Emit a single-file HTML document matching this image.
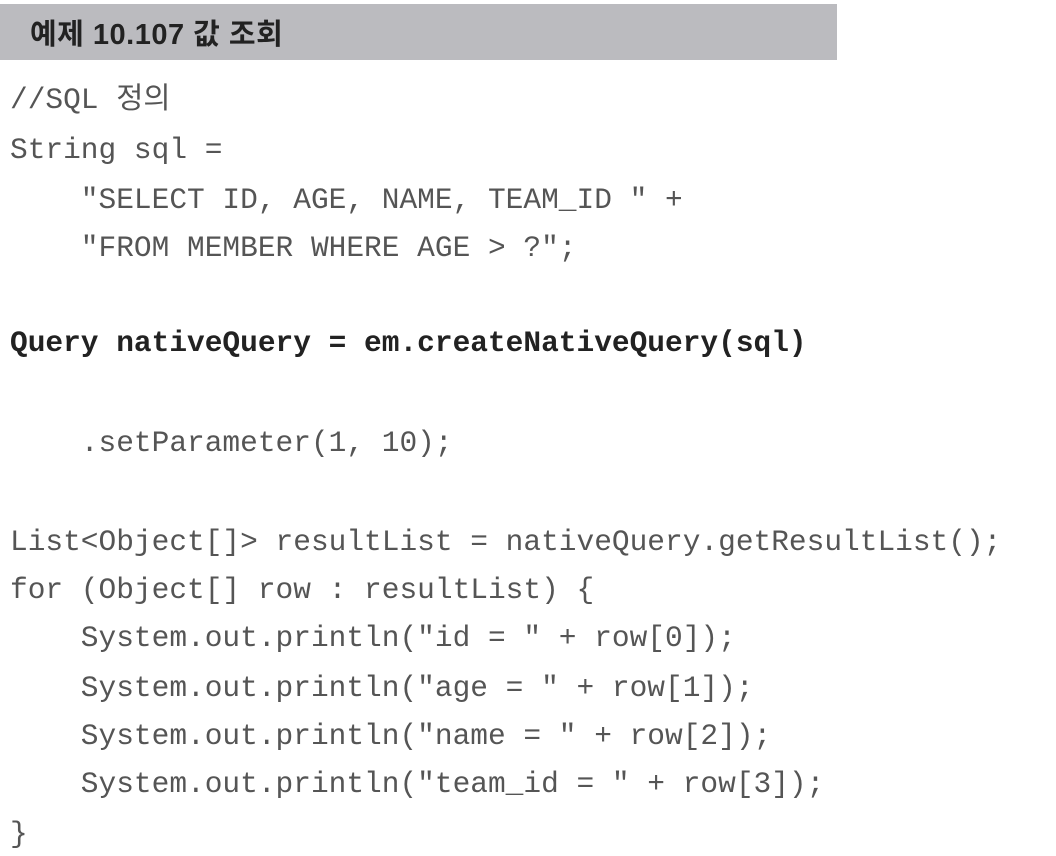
<!DOCTYPE html>
<html><head><meta charset="utf-8"><style>
html,body{margin:0;padding:0;background:#fff;width:1056px;height:856px;overflow:hidden;position:relative}
.bar{position:absolute;left:0;top:4px;width:837px;height:56px;background:#bbbbbf}
.ttl{position:absolute;left:30px;top:11px;font:bold 29px "Liberation Sans","Noto Sans CJK KR",sans-serif;color:#222;letter-spacing:0.5px}
.l{position:absolute;left:10px;font-family:"Liberation Mono","Noto Sans CJK KR",monospace;font-size:29.5px;color:#555;white-space:pre;line-height:34px}
.b{font-weight:bold;color:#222}
</style></head><body>
<div class="bar"></div><div class="ttl">예제 10.107 값 조회</div>
<div class="l" style="top:83px">//SQL 정의</div>
<div class="l" style="top:133px">String sql =</div>
<div class="l" style="top:183px">    "SELECT ID, AGE, NAME, TEAM_ID " +</div>
<div class="l" style="top:231px">    "FROM MEMBER WHERE AGE > ?";</div>
<div class="l b" style="top:326px">Query nativeQuery = em.createNativeQuery(sql)</div>
<div class="l" style="top:426px">    .setParameter(1, 10);</div>
<div class="l" style="top:525px">List&lt;Object[]&gt; resultList = nativeQuery.getResultList();</div>
<div class="l" style="top:573px">for (Object[] row : resultList) {</div>
<div class="l" style="top:621px">    System.out.println("id = " + row[0]);</div>
<div class="l" style="top:671px">    System.out.println("age = " + row[1]);</div>
<div class="l" style="top:719px">    System.out.println("name = " + row[2]);</div>
<div class="l" style="top:767px">    System.out.println("team_id = " + row[3]);</div>
<div class="l" style="top:817px">}</div>
</body></html>
